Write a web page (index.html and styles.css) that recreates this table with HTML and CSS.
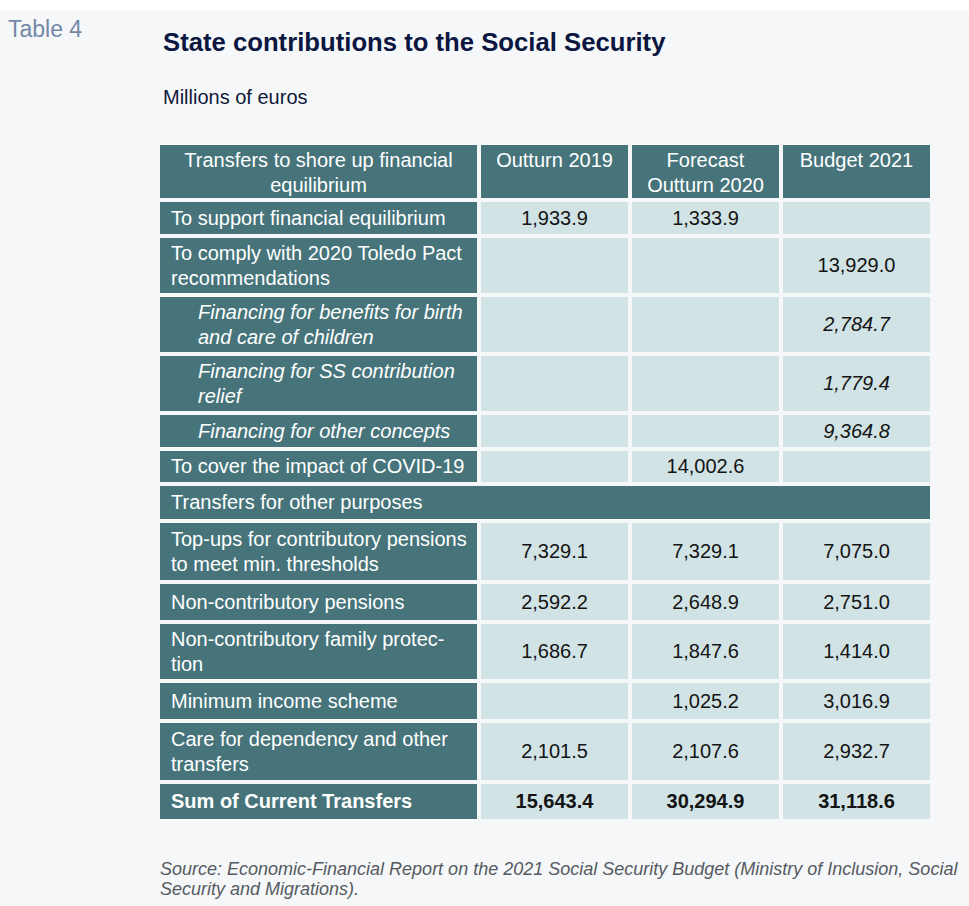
FILE: index.html
```html
<!DOCTYPE html>
<html lang="en">
<head>
<meta charset="utf-8">
<title>Table 4</title>
<link rel="stylesheet" href="styles.css">
</head>
<body>
<div class="page">
  <div class="side">Table 4</div>
  <div class="main">
    <h1 class="title">State contributions to the Social Security</h1>
    <p class="unit">Millions of euros</p>
    <table class="data">
      <colgroup>
        <col class="c-label">
        <col class="c-num">
        <col class="c-num">
        <col class="c-num">
      </colgroup>
      <thead>
        <tr class="head">
          <th>Transfers to shore up financial equilibrium</th>
          <th>Outturn 2019</th>
          <th>Forecast Outturn 2020</th>
          <th>Budget 2021</th>
        </tr>
      </thead>
      <tbody>
        <tr class="h32">
          <td class="lbl">To support financial equilibrium</td>
          <td class="num">1,933.9</td>
          <td class="num">1,333.9</td>
          <td class="num"></td>
        </tr>
        <tr class="h55">
          <td class="lbl">To comply with 2020 Toledo Pact recommendations</td>
          <td class="num"></td>
          <td class="num"></td>
          <td class="num">13,929.0</td>
        </tr>
        <tr class="h55 sub">
          <td class="lbl">Financing for benefits for birth and care of children</td>
          <td class="num"></td>
          <td class="num"></td>
          <td class="num">2,784.7</td>
        </tr>
        <tr class="h55 sub">
          <td class="lbl">Financing for SS contribution relief</td>
          <td class="num"></td>
          <td class="num"></td>
          <td class="num">1,779.4</td>
        </tr>
        <tr class="h32 sub">
          <td class="lbl">Financing for other concepts</td>
          <td class="num"></td>
          <td class="num"></td>
          <td class="num">9,364.8</td>
        </tr>
        <tr class="h31">
          <td class="lbl">To cover the impact of COVID-19</td>
          <td class="num"></td>
          <td class="num">14,002.6</td>
          <td class="num"></td>
        </tr>
        <tr class="h33">
          <td class="lbl section" colspan="4">Transfers for other purposes</td>
        </tr>
        <tr class="h57">
          <td class="lbl">Top-ups for contributory pensions to meet min. thresholds</td>
          <td class="num">7,329.1</td>
          <td class="num">7,329.1</td>
          <td class="num">7,075.0</td>
        </tr>
        <tr class="h36">
          <td class="lbl">Non-contributory pensions</td>
          <td class="num">2,592.2</td>
          <td class="num">2,648.9</td>
          <td class="num">2,751.0</td>
        </tr>
        <tr class="h55">
          <td class="lbl">Non-contributory family protec-<br>tion</td>
          <td class="num">1,686.7</td>
          <td class="num">1,847.6</td>
          <td class="num">1,414.0</td>
        </tr>
        <tr class="h36">
          <td class="lbl">Minimum income scheme</td>
          <td class="num"></td>
          <td class="num">1,025.2</td>
          <td class="num">3,016.9</td>
        </tr>
        <tr class="h57">
          <td class="lbl">Care for dependency and other transfers</td>
          <td class="num">2,101.5</td>
          <td class="num">2,107.6</td>
          <td class="num">2,932.7</td>
        </tr>
        <tr class="h35 total">
          <td class="lbl">Sum of Current Transfers</td>
          <td class="num">15,643.4</td>
          <td class="num">30,294.9</td>
          <td class="num">31,118.6</td>
        </tr>
      </tbody>
    </table>
    <p class="source">Source: Economic-Financial Report on the 2021 Social Security Budget (Ministry of Inclusion, Social Security and Migrations).</p>
  </div>
</div>
</body>
</html>
```

FILE: styles.css
```css
html, body {
  margin: 0;
  padding: 0;
  background: #ffffff;
}

body {
  font-family: "Liberation Sans", Arial, sans-serif;
}

.page {
  margin-top: 10px;
  background: #f6f7f9;
  min-height: 896px;
  display: flex;
  align-items: flex-start;
}

.side {
  width: 160px;
  flex: 0 0 160px;
  box-sizing: border-box;
  padding-left: 8px;
  padding-top: 5px;
  font-size: 23px;
  line-height: 28px;
  color: #7388a7;
}

.main {
  flex: 1 1 auto;
}

.title {
  margin: 17px 0 0 0;
  padding-left: 3px;
  font-size: 25.7px;
  line-height: 30px;
  font-weight: bold;
  color: #0b1740;
}

.unit {
  margin: 28px 0 0 0;
  padding-left: 3px;
  font-size: 20px;
  line-height: 24px;
  color: #101a38;
}

.data {
  margin: 32px 0 0 -4px;
  border-collapse: separate;
  border-spacing: 4px;
  table-layout: fixed;
  width: 778px;
  font-size: 20px;
  line-height: 25px;
}

.c-label { width: 317px; }
.c-num { width: 147px; }

.data th,
.data td {
  padding: 0;
  box-sizing: border-box;
}

.data .head th {
  background: #46747a;
  color: #ffffff;
  font-weight: normal;
  text-align: center;
  vertical-align: top;
  padding: 3px 8px 0 8px;
  height: 52px;
}

.data .lbl {
  background: #46747a;
  color: #ffffff;
  padding: 0 10px 0 11px;
  vertical-align: middle;
}

.data .sub .lbl {
  font-style: italic;
  padding-left: 38px;
}

.data .num {
  background: #d1e3e5;
  color: #141414;
  text-align: center;
  vertical-align: middle;
}

.data .sub .num {
  font-style: italic;
}

.data .total td {
  font-weight: bold;
}

.h31 td { height: 31px; }
.h32 td { height: 32px; }
.h33 td { height: 33px; }
.h35 td { height: 35px; }
.h36 td { height: 36px; }
.h55 td { height: 55px; }
.h57 td { height: 57px; }

.source {
  margin: 36px 0 0 0;
  font-size: 18px;
  line-height: 20px;
  font-style: italic;
  color: #555a60;
  width: 805px;
}
```
